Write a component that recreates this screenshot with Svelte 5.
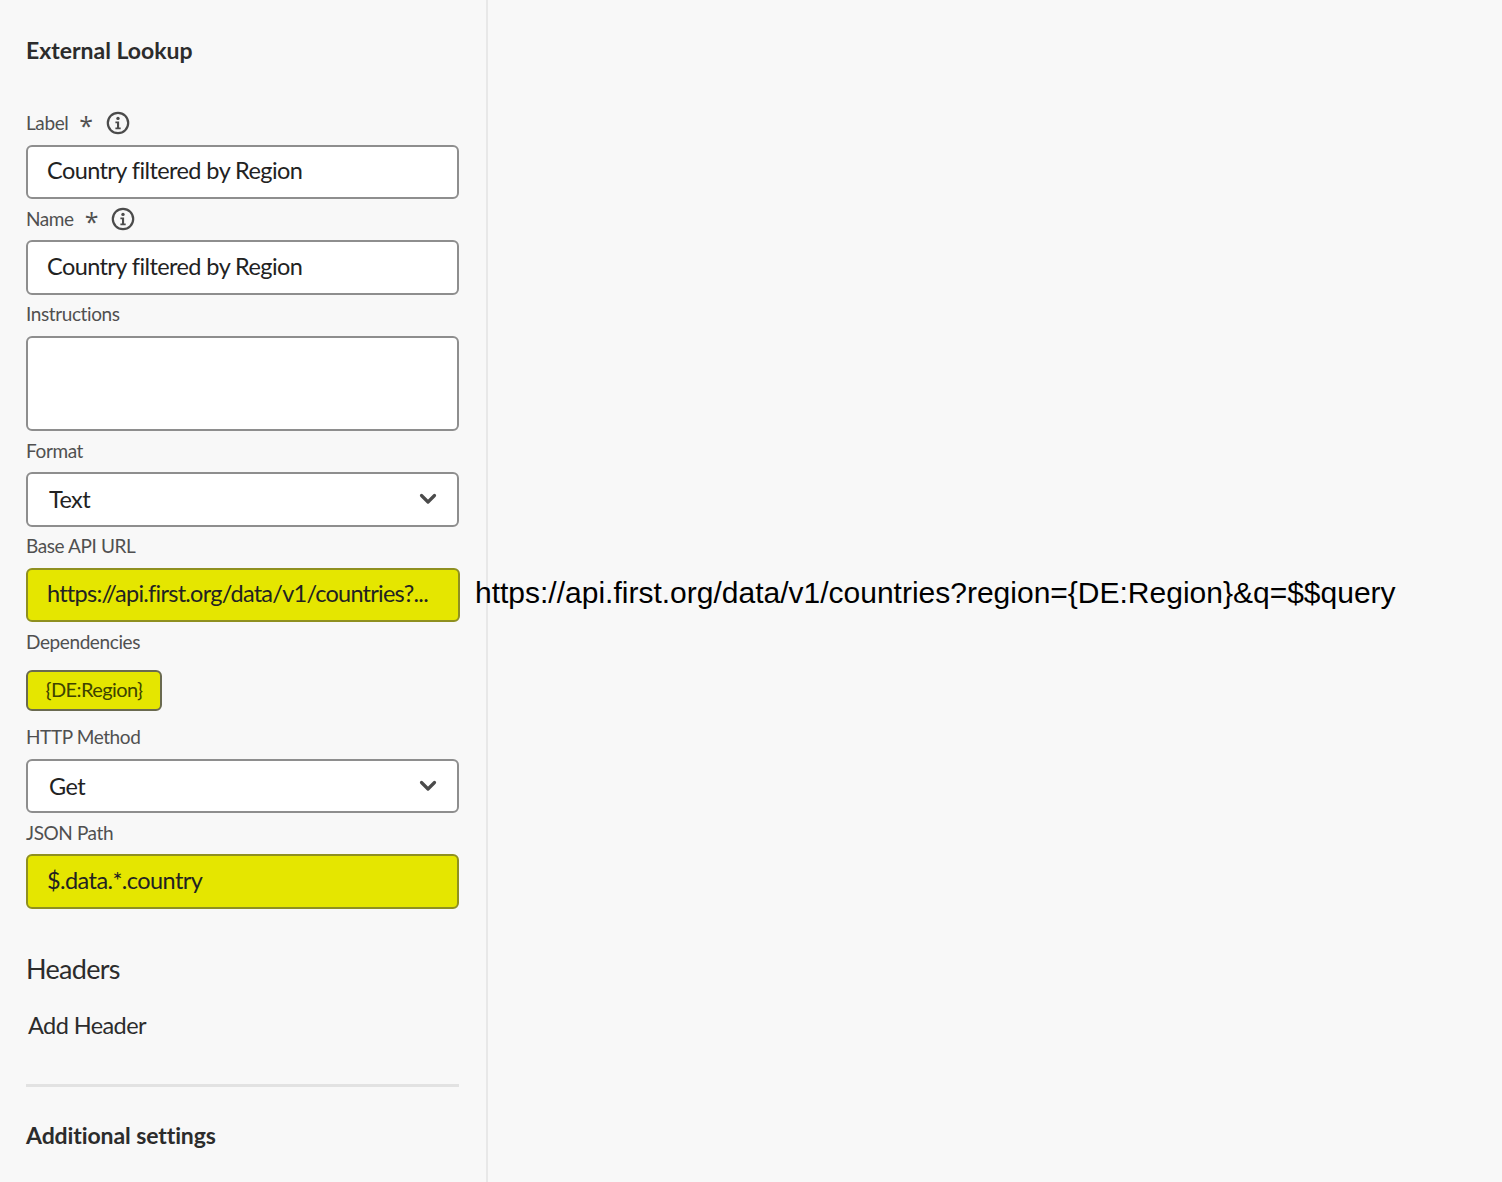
<script>
const star = '*'
</script>

<div class="page">
	<aside class="panel">
		<h2 class="title">External Lookup</h2>

		<div class="form">
			<div class="label label-first">
				<span>Label</span>
				<span class="star">{star}</span>
				<svg class="info" viewBox="0 0 24 24" aria-hidden="true">
					<circle cx="12" cy="12" r="10.2" fill="none" stroke="currentColor" stroke-width="2.2" />
					<circle cx="12" cy="7.4" r="1.7" fill="currentColor" />
					<path d="M9.4 10.4h3.7v6.1h1.6v1.8H9.4v-1.8h1.6v-4.3H9.4z" fill="currentColor" />
				</svg>
			</div>
			<div class="input"><span class="value">Country filtered by Region</span></div>

			<div class="label">
				<span>Name</span>
				<span class="star">{star}</span>
				<svg class="info" viewBox="0 0 24 24" aria-hidden="true">
					<circle cx="12" cy="12" r="10.2" fill="none" stroke="currentColor" stroke-width="2.2" />
					<circle cx="12" cy="7.4" r="1.7" fill="currentColor" />
					<path d="M9.4 10.4h3.7v6.1h1.6v1.8H9.4v-1.8h1.6v-4.3H9.4z" fill="currentColor" />
				</svg>
			</div>
			<div class="input"><span class="value">Country filtered by Region</span></div>

			<div class="label label-tight">Instructions</div>
			<div class="input textarea"></div>

			<div class="label label-format">Format</div>
			<div class="input select">
				<span>Text</span>
				<svg class="chevron" viewBox="0 0 18 12" aria-hidden="true">
					<path d="M2.5 2.5 9 9l6.5-6.5" fill="none" stroke="currentColor" stroke-width="3.2" stroke-linecap="round" stroke-linejoin="round" />
				</svg>
			</div>

			<div class="label">Base API URL</div>
			<div class="url-row">
				<div class="input mark url"><span class="value">https://api.first.org/data/v1/countries?...</span></div>
				<div class="url-full">https://api.first.org/data/v1/countries?region=&#123;DE:Region&#125;&amp;q=$$query</div>
			</div>

			<div class="label">Dependencies</div>
			<div class="tag"><span>&#123;DE:Region&#125;</span></div>

			<div class="label label-method">HTTP Method</div>
			<div class="input select">
				<span>Get</span>
				<svg class="chevron" viewBox="0 0 18 12" aria-hidden="true">
					<path d="M2.5 2.5 9 9l6.5-6.5" fill="none" stroke="currentColor" stroke-width="3.2" stroke-linecap="round" stroke-linejoin="round" />
				</svg>
			</div>

			<div class="label">JSON Path</div>
			<div class="input mark"><span class="value">$.data.*.country</span></div>
		</div>

		<h3 class="headers">Headers</h3>
		<div class="add-header">Add Header</div>
		<hr class="divider" />
		<h2 class="title settings">Additional settings</h2>
	</aside>
</div>

<style>
:global(body) {
	margin: 0;
	background: #f8f8f8;
}

.page {
	height: 1182px;
	overflow: hidden;
	font-family: Lato, "Open Sans", sans-serif;
	color: #2c2c2c;
}

.panel {
	box-sizing: border-box;
	width: 488px;
	height: 100%;
	padding: 0 27px 0 26px;
	border-right: 2px solid #e8e8e8;
}

.title {
	margin: 0;
	padding-top: 35px;
	font-size: 23px;
	line-height: 30px;
	font-weight: 700;
}

.form {
	display: flex;
	flex-direction: column;
}

.label {
	display: flex;
	align-items: center;
	height: 41px;
	padding-bottom: 3px;
	box-sizing: border-box;
	font-size: 19px;
	letter-spacing: -0.4px;
	color: #505050;
}

.label-first {
	height: 43.9px;
	margin-top: 36px;
	padding-bottom: 1px;
}

.label-tight {
	padding-bottom: 4px;
}

.label-format {
	height: 41.2px;
	padding-bottom: 2px;
}

.label-method {
	height: 47.7px;
	padding-top: 6px;
}

.star {
	margin-left: 11px;
	font-family: "Open Sans", sans-serif;
	font-size: 25px;
	line-height: 18px;
	height: 12px;
}

.info {
	width: 24px;
	height: 24px;
	margin-top: 2px;
	margin-left: 13px;
	color: #4b4b4b;
}

.input {
	box-sizing: border-box;
	display: flex;
	align-items: center;
	height: 54.5px;
	padding: 0 19px;
	background: #fff;
	border: 2px solid #8e8e8e;
	border-radius: 6px;
	font-size: 23.5px;
	letter-spacing: -0.58px;
	color: #222;
}

.value {
	margin-top: -4px;
}

.textarea {
	height: 95px;
}

.select {
	justify-content: space-between;
	padding-left: 21px;
	padding-right: 20px;
}

.chevron {
	width: 18px;
	height: 12px;
	color: #4b4b4b;
}

.mark {
	background: #e5e600;
	border-color: #8f9020;
}

.url-row {
	position: relative;
}

.url {
	width: 434px;
	white-space: nowrap;
	letter-spacing: -0.75px;
}

.url-full {
	position: absolute;
	left: 449px;
	top: 7px;
	font-family: "Liberation Sans", Arial, sans-serif;
	font-size: 30px;
	line-height: 36px;
	color: #000;
	white-space: nowrap;
}

.tag {
	box-sizing: border-box;
	display: flex;
	align-items: center;
	justify-content: center;
	width: 136px;
	height: 41px;
	margin-top: 7px;
	background: #e5e600;
	border: 2px solid #6a6a50;
	border-radius: 6px;
	font-size: 20px;
	letter-spacing: -0.6px;
	color: #3e4300;
}

.tag span {
	margin-top: -4px;
}

.headers {
	margin: 0;
	padding-top: 42px;
	font-size: 27px;
	line-height: 36px;
	font-weight: 400;
	letter-spacing: -0.7px;
}

.add-header {
	margin: 23px 0 0 2px;
	font-size: 23.5px;
	line-height: 30px;
	letter-spacing: -0.58px;
}

.divider {
	height: 3px;
	margin: 44px 0 0;
	background: #e2e2e2;
	border: 0;
}

.settings {
	padding-top: 33px;
	letter-spacing: -0.1px;
}
</style>
